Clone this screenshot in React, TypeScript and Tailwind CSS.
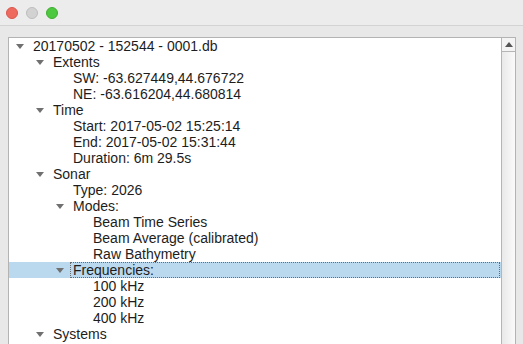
import React from "react";

interface INode {
  label: string;
  level: number;
  open?: boolean;
  selected?: boolean;
}

const rows: INode[] = [
  { label: "20170502 - 152544 - 0001.db", level: 0, open: true },
  { label: "Extents", level: 1, open: true },
  { label: "SW: -63.627449,44.676722", level: 2 },
  { label: "NE: -63.616204,44.680814", level: 2 },
  { label: "Time", level: 1, open: true },
  { label: "Start: 2017-05-02 15:25:14", level: 2 },
  { label: "End: 2017-05-02 15:31:44", level: 2 },
  { label: "Duration: 6m 29.5s", level: 2 },
  { label: "Sonar", level: 1, open: true },
  { label: "Type: 2026", level: 2 },
  { label: "Modes:", level: 2, open: true },
  { label: "Beam Time Series", level: 3 },
  { label: "Beam Average (calibrated)", level: 3 },
  { label: "Raw Bathymetry", level: 3 },
  { label: "Frequencies:", level: 2, open: true, selected: true },
  { label: "100 kHz", level: 3 },
  { label: "200 kHz", level: 3 },
  { label: "400 kHz", level: 3 },
  { label: "Systems", level: 1, open: true },
];

const indent = ["pl-[7px]", "pl-[27px]", "pl-[47px]", "pl-[67px]"];

function Arrow() {
  return (
    <svg width="8" height="5" viewBox="0 0 8 5" className="block">
      <polygon points="0,0 8,0 4,5" fill="#707070" />
    </svg>
  );
}

function Row({ node }: { node: INode }) {
  return (
    <div
      className={`flex items-center h-[16px] ${indent[node.level]} ${
        node.selected ? "bg-[#bad9ee]" : ""
      }`}
    >
      <span className="w-[17px] flex items-center shrink-0">
        {node.open && <Arrow />}
      </span>
      {node.selected ? (
        <span className="flex-1 h-[16px] -ml-[3px] pl-[2px] mr-[1px] border border-dotted border-[#6a6a6a] flex items-center leading-[14px]">
          {node.label}
        </span>
      ) : (
        <span className="whitespace-nowrap">{node.label}</span>
      )}
    </div>
  );
}

export default function App() {
  return (
    <div
      className="w-[523px] h-[344px] overflow-hidden bg-[#e8e8e8] text-[#1d1d1d] text-[14px] leading-[16px]"
      style={{ fontFamily: '"Liberation Sans", Arial, sans-serif' }}
    >
      {/* title bar */}
      <div className="h-[26px] bg-[#ececec] border-b border-[#d3d3d3] flex items-center gap-[8px] pl-[6px]">
        <span className="w-[12px] h-[12px] rounded-full bg-[#ee6a5f] border border-[#d9574c]" />
        <span className="w-[12px] h-[12px] rounded-full bg-[#d2d2d2] border border-[#bdbdbd]" />
        <span className="w-[12px] h-[12px] rounded-full bg-[#4ec83f] border border-[#3fae32]" />
      </div>

      {/* tree */}
      <div className="pt-[11px] pl-[8px] pr-[7px]">
        <div className="h-[330px] flex bg-white border border-[#b3b3b3]">
          <div className="flex-1 overflow-hidden">
            {rows.map((r, i) => (
              <Row key={i} node={r} />
            ))}
          </div>
          <div className="w-[14px] border-l border-[#b5b5b5] flex flex-col">
            <div className="h-[14px] border-b border-[#b5b5b5] bg-[#f4f4f4] flex items-center justify-center">
              <svg width="8" height="5" viewBox="0 0 8 5">
                <polygon points="0,5 8,5 4,0" fill="#555" />
              </svg>
            </div>
            <div className="flex-1 bg-gradient-to-r from-[#e9e9e9] to-[#fafafa]" />
          </div>
        </div>
      </div>
    </div>
  );
}
